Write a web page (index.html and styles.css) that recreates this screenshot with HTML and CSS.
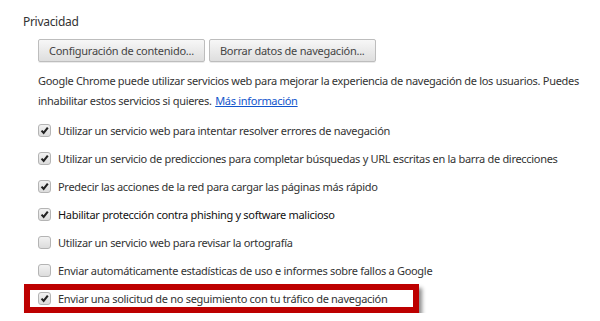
FILE: index.html
```html
<!DOCTYPE html>
<html lang="es">
<head>
    <meta charset="UTF-8">
    <title>Privacidad</title>
    <link rel="stylesheet" href="styles.css">
</head>
<body>
    <section class="section">
        <h3 class="section-title">Privacidad</h3>
        <div class="section-body">
            <div class="buttons">
                <button class="btn">Configuración de contenido...</button>
                <button class="btn">Borrar datos de navegación...</button>
            </div>
            <p class="explain">Google Chrome puede utilizar servicios web para mejorar la experiencia de navegación de los usuarios. Puedes inhabilitar estos servicios si quieres. <a href="#">Más información</a></p>

            <div class="options">
                <label class="option">
                    <span class="box checked"><svg viewBox="0 0 13 13"><path d="M3 6.6 L5.5 9.4 L10.4 3"/></svg></span>
                    <span>Utilizar un servicio web para intentar resolver errores de navegación</span>
                </label>
                <label class="option">
                    <span class="box checked"><svg viewBox="0 0 13 13"><path d="M3 6.6 L5.5 9.4 L10.4 3"/></svg></span>
                    <span>Utilizar un servicio de predicciones para completar búsquedas y URL escritas en la barra de direcciones</span>
                </label>
                <label class="option">
                    <span class="box checked"><svg viewBox="0 0 13 13"><path d="M3 6.6 L5.5 9.4 L10.4 3"/></svg></span>
                    <span>Predecir las acciones de la red para cargar las páginas más rápido</span>
                </label>
                <label class="option strong">
                    <span class="box checked"><svg viewBox="0 0 13 13"><path d="M3 6.6 L5.5 9.4 L10.4 3"/></svg></span>
                    <span>Habilitar protección contra phishing y software malicioso</span>
                </label>
                <label class="option">
                    <span class="box"></span>
                    <span>Utilizar un servicio web para revisar la ortografía</span>
                </label>
                <label class="option">
                    <span class="box"></span>
                    <span>Enviar automáticamente estadísticas de uso e informes sobre fallos a Google</span>
                </label>
                <div class="highlight">
                    <label class="option">
                        <span class="box checked"><svg viewBox="0 0 13 13"><path d="M3 6.6 L5.5 9.4 L10.4 3"/></svg></span>
                        <span>Enviar una solicitud de no seguimiento con tu tráfico de navegación</span>
                    </label>
                </div>
            </div>
        </div>
    </section>
</body>
</html>
```

FILE: styles.css
```css
body {
    margin: 0;
    background: #fff;
    font-family: "Noto Sans", "Open Sans", sans-serif;
    font-size: 11px;
    letter-spacing: -0.3px;
    color: #333;
}

.section {
    padding: 14px 0 0 23px;
}

.section-title {
    margin: 0;
    font-size: 12px;
    font-weight: normal;
    color: #333;
    line-height: 16px;
}

.section-body {
    padding-left: 15px;
}

.buttons {
    display: flex;
    gap: 4px;
    margin-top: 9px;
}

.btn {
    height: 23px;
    padding: 0 10px;
    font-family: inherit;
    font-size: 11px;
    letter-spacing: -0.25px;
    color: #444;
    background: linear-gradient(#f7f7f7, #dedede);
    border: 1px solid #bdbdbd;
    border-radius: 2px;
    box-shadow: 0 1px 0 rgba(0, 0, 0, 0.08);
}

.explain {
    margin: 9px 0 0;
    line-height: 20px;
}

.explain a {
    margin-left: 1px;
    color: #1155cc;
}

.options {
    margin-top: 5px;
}

.option {
    display: flex;
    align-items: center;
    gap: 7px;
    height: 28px;
}

.box {
    box-sizing: border-box;
    width: 13px;
    height: 13px;
    flex: none;
    border: 1px solid #b4b4b4;
    border-radius: 3px;
    background: linear-gradient(#f2f2f2, #dcdcdc);
}

.box svg {
    display: block;
    width: 11px;
    height: 11px;
    overflow: visible;
}

.box path {
    fill: none;
    stroke: #222;
    stroke-width: 2.4;
}

.strong {
    color: #111;
}

.highlight {
    width: 375px;
    margin-left: -14px;
    padding-left: 8px;
    border: 6px solid #bd0000;
    box-shadow: 3px 4px 4px rgba(0, 0, 0, 0.45);
}

.highlight .option {
    height: 17px;
}
```
